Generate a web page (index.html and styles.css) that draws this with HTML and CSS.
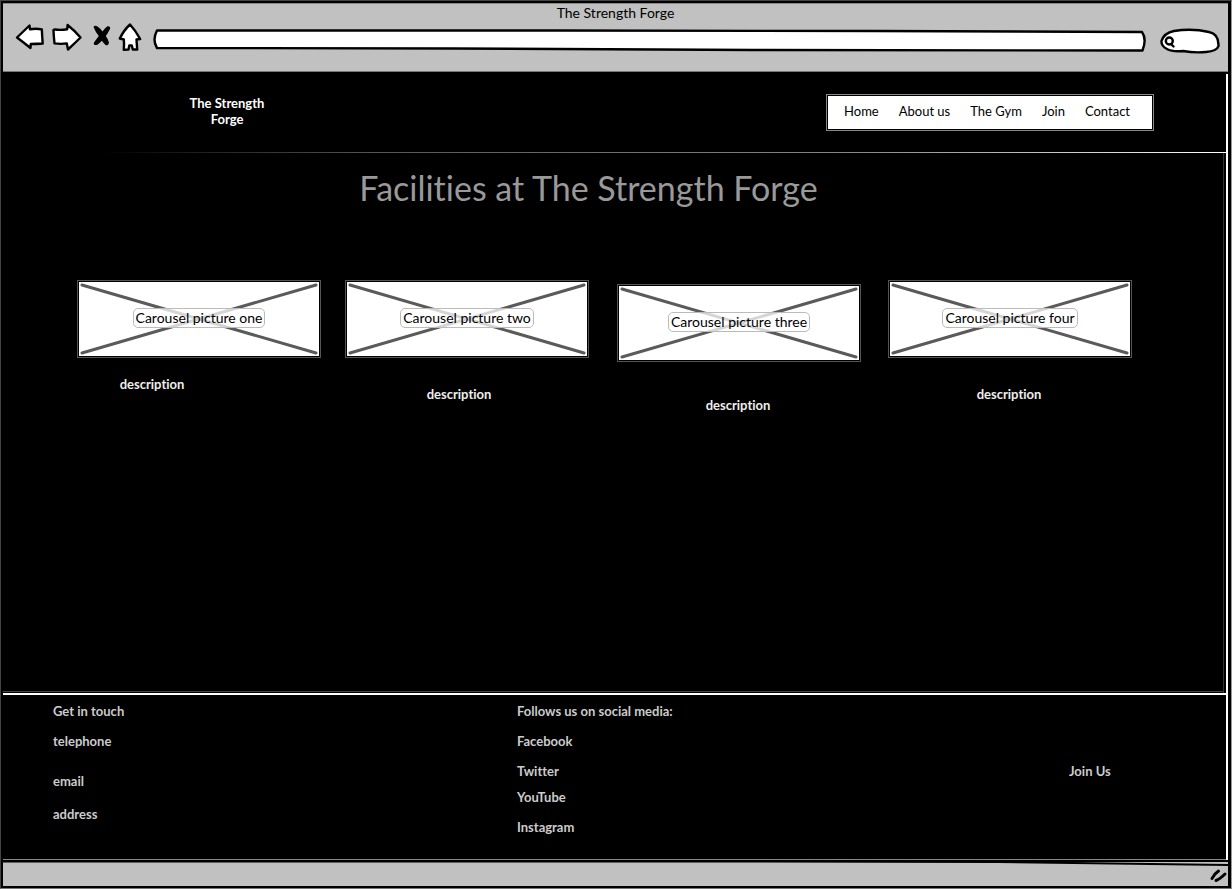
FILE: index.html
```html
<!DOCTYPE html>
<html lang="en">
<head>
<meta charset="utf-8">
<meta name="viewport" content="width=device-width, initial-scale=1">
<title>The Strength Forge</title>
<link rel="stylesheet" href="styles.css">
</head>
<body>
<div class="window">
  <div class="chrome">
    <div class="chrome-title">The Strength Forge</div>
    <div class="toolbar">
      <div class="tools">
        <button class="tool" type="button" aria-label="Back"><svg width="30" height="30" viewBox="0 0 30 30"><path class="ink" d="M2 15.500 14.500 3.500 15 7.300Q21 6.300 26.800 7.400Q27.200 15 27.700 21.500Q22 22 15.800 22L15.500 26Q8 20 2 15.500Z"/></svg></button>
        <button class="tool tool-forward" type="button" aria-label="Forward"><svg width="32" height="30" viewBox="0 0 32 30"><path class="ink" d="M1.500 8.800Q1 7.500 3 7.500Q9 8.300 15.200 7.200L15.600 3Q22 8 28.500 15.500Q23 21 16 27.500L14.800 21.400Q9 22.300 2.500 21.400Q1.800 15 1.500 8.800Z"/></svg></button>
        <button class="tool tool-stop" type="button" aria-label="Stop"><svg width="20" height="30" viewBox="0 0 20 30"><path class="solid" d="M1.500 5Q2.500 3 5.500 4.500Q8.500 6.500 10.500 9.500Q12.500 6 15.500 4.200Q19 4 18 7Q16 11 13.800 14Q16 17 17 20.500Q16.500 24 13.500 23Q11.500 21 9.800 18.800Q7.500 21.500 5 23Q1 23.500 2 20.500Q4.500 17 6.800 14Q3.500 10 1.500 5Z"/></svg></button>
        <button class="tool tool-home" type="button" aria-label="Home"><svg width="26" height="30" viewBox="0 0 26 30"><path class="ink" d="M13 2.500Q18.500 8.500 23.200 17L19.500 17.500 20.200 27.500H15.800L14.800 23.500H12.300L11.500 27.500 6.800 27.800Q7.300 22 6.800 17.500L2.800 16.500Q7 8 13 2.500Z"/></svg></button>
      </div>
      <div class="field">
        <svg class="field-shape" viewBox="0 0 992 24" preserveAspectRatio="none"><path class="ink" d="M4 1.500H400L720 2 988 3Q993 10 988.500 21.500L600 21 300 19.500 4 19Q-1 11 4 1.500Z"/></svg>
        <input class="field-input" type="text" aria-label="Address">
      </div>
      <div class="field search">
        <svg class="field-shape" viewBox="0 0 60 26" preserveAspectRatio="none"><path class="ink" d="M1.500 13Q4 5 14 3Q32 0 49 4Q59 6 58.500 18Q57 23 46 24Q34 25 23 23Q12 24 7 21Q1 18 1.500 13Z"/><circle class="ink" cx="9.300" cy="13" r="3.500"/><path class="ink" d="M11 16 13.500 18.500"/></svg>
        <input class="field-input" type="search" aria-label="Search">
      </div>
    </div>
  </div>

  <div class="page">
    <header class="site-header">
      <div class="brand">The Strength Forge</div>
      <nav class="nav">
        <div class="nav-inner">
          <a href="#">Home</a>
          <a href="#">About us</a>
          <a href="#">The Gym</a>
          <a href="#">Join</a>
          <a href="#">Contact</a>
        </div>
      </nav>
    </header>

    <main class="main">
      <h1 class="heading">Facilities at The Strength Forge</h1>
      <div class="cards">
        <section class="card">
          <div class="picture"><svg class="cross" viewBox="0 0 240 74" preserveAspectRatio="none"><path d="M3 3 237 71M237 3 3 71"/></svg><span class="tag">Carousel picture one</span></div>
          <p class="description first">description</p>
        </section>
        <section class="card">
          <div class="picture"><svg class="cross" viewBox="0 0 240 74" preserveAspectRatio="none"><path d="M3 3 237 71M237 3 3 71"/></svg><span class="tag">Carousel picture two</span></div>
          <p class="description second">description</p>
        </section>
        <section class="card lowered">
          <div class="picture"><svg class="cross" viewBox="0 0 240 74" preserveAspectRatio="none"><path d="M3 3 237 71M237 3 3 71"/></svg><span class="tag">Carousel picture three</span></div>
          <p class="description third">description</p>
        </section>
        <section class="card spaced">
          <div class="picture"><svg class="cross" viewBox="0 0 240 74" preserveAspectRatio="none"><path d="M3 3 237 71M237 3 3 71"/></svg><span class="tag">Carousel picture four</span></div>
          <p class="description fourth">description</p>
        </section>
      </div>
    </main>

    <footer class="footer">
      <div class="column">
        <p>Get in touch</p>
        <p>telephone</p>
        <p class="email">email</p>
        <p class="address">address</p>
      </div>
      <div class="column">
        <p>Follows us on social media:</p>
        <a href="#">Facebook</a>
        <a href="#">Twitter</a>
        <a class="youtube" href="#">YouTube</a>
        <a href="#">Instagram</a>
      </div>
      <div class="column join"><a href="#">Join Us</a></div>
    </footer>
  </div>

  <div class="status">
    <svg class="status-edge" viewBox="0 0 1232 8" preserveAspectRatio="none"><path d="M0 1.500H700L1000 2 1232 5"/></svg>
    <svg class="grip" width="18" height="15" viewBox="0 0 18 15"><path d="M2 10.500Q4 6 8.500 3M6 12.500Q10 11 15 6"/></svg>
  </div>
</div>
</body>
</html>
```

FILE: styles.css
```css
* { box-sizing: border-box; }

body {
  margin: 0;
  background: #000;
  color: #000;
  font: 14px/16px Lato, "Open Sans", sans-serif;
  font-variant-ligatures: none;
}

p, h1 { margin: 0; }
a { color: inherit; text-decoration: none; }

.ink { fill: #fff; stroke: #000; stroke-width: 2.4; stroke-linejoin: round; stroke-linecap: round; }
.solid { fill: #000; }

.window {
  display: flex;
  flex-direction: column;
  min-height: 100vh;
  border: 1px solid #444;
  border-right-color: #999;
  border-bottom-color: #777;
}

.chrome {
  margin: 2px 3px 0 2px;
  height: 69px;
  background: #c1c1c1;
  border-top: 1px solid #888;
  border-bottom: 1px solid #777;
}

.chrome-title { padding-top: 1px; text-align: center; }

.toolbar {
  display: flex;
  align-items: flex-start;
  padding: 1px 8px 0 12px;
}

.tools { display: flex; }

.tool {
  display: block;
  padding: 0;
  border: 0;
  background: none;
  height: 30px;
}
.tool svg { display: block; }
.tool-forward { margin-left: 7px; }
.tool-stop { margin-left: 8px; }
.tool-home { margin-left: 5px; }

.field {
  position: relative;
  flex: 1;
  height: 24px;
  margin: 7px 0 0 10px;
}
.field-shape { position: absolute; inset: 0; width: 100%; height: 100%; }
.field-input {
  position: relative;
  width: 100%;
  height: 100%;
  padding: 0 10px;
  border: 0;
  background: none;
  font: inherit;
  outline: 0;
}
.search { flex: 0 0 60px; height: 26px; margin: 6px 0 0 14px; }
.search .field-input { padding-left: 18px; }

.page {
  flex: 1;
  display: flex;
  flex-direction: column;
  margin: 2px 3px 0 2px;
  border-right: 2px solid #fff;
}

.site-header {
  display: flex;
  justify-content: space-between;
  align-items: flex-start;
  height: 78px;
  padding: 20px 72px 0 174px;
  font-size: 13px;
}

.brand {
  width: 100px;
  padding-top: 1px;
  color: #fff;
  font-weight: 700;
  text-align: center;
}

.nav { border: 1px solid #888; padding: 1px; }
.nav-inner {
  display: flex;
  gap: 20px;
  padding: 7px 22px 10px 16px;
  background: #fff;
}

.main {
  flex: 1;
  border-top: 1px solid;
  border-image: linear-gradient(90deg, #000 8%, #555 30%, #888 70%, #fff) 1;
  box-shadow: inset -2px 0 0 #000, inset -3px 0 0 #333, inset 0 -1px 0 #000, inset 0 -2px 0 #444;
}

.heading {
  padding: 15px 52px 0 0;
  color: #999;
  font-size: 34px;
  line-height: 40px;
  font-weight: 400;
  text-align: center;
}

.cards {
  display: flex;
  align-items: flex-start;
  gap: 24px;
  padding: 72px 94px 0 74px;
}
.card { flex: 1; }
.lowered { margin: 4px 0 0 4px; }
.spaced { margin-left: 3px; }

.picture {
  position: relative;
  display: flex;
  align-items: center;
  justify-content: center;
  height: 78px;
  padding: 0 2px 2px;
  border: 1px solid #555;
}
.cross {
  position: absolute;
  inset: 1px;
  width: calc(100% - 2px);
  height: 74px;
  background: #fff;
}
.cross path { fill: none; stroke: #5a5a5a; stroke-width: 3; stroke-linecap: round; }
.tag {
  position: relative;
  padding: 1px 2px;
  border: 1px solid #bbb;
  border-radius: 5px;
  background: rgba(255, 255, 255, .75);
}

.description { color: #eee; font-size: 13px; font-weight: 700; text-align: center; }
.first { padding: 18px 94px 0 0; }
.second { padding: 28px 16px 0 0; }
.third { padding: 35px 2px 0 0; }
.fourth { padding: 28px 2px 0 0; }

.footer {
  display: grid;
  grid-template-columns: 464fr 552fr 157fr;
  height: 167px;
  padding: 8px 0 0 50px;
  border-top: 2px solid #fff;
  border-bottom: 1px solid #888;
  color: #ccc;
  font-size: 13px;
  font-weight: 700;
}
.column { display: flex; flex-direction: column; align-items: flex-start; gap: 14px; }
.email { margin-top: 10px; }
.address { margin-top: 3px; }
.youtube { margin-top: -4px; }
.join { padding-top: 60px; }

.status {
  position: relative;
  display: flex;
  align-items: center;
  justify-content: flex-end;
  height: 24px;
  margin: 2px 3px 2px 2px;
  padding-top: 2px;
  background: #c1c1c1;
}
.status-edge { position: absolute; inset: -2px 0 auto; width: 100%; height: 8px; }
.status-edge path { fill: none; stroke: #000; stroke-width: 2; }
.grip path { fill: none; stroke: #000; stroke-width: 3; stroke-linecap: round; }
```
